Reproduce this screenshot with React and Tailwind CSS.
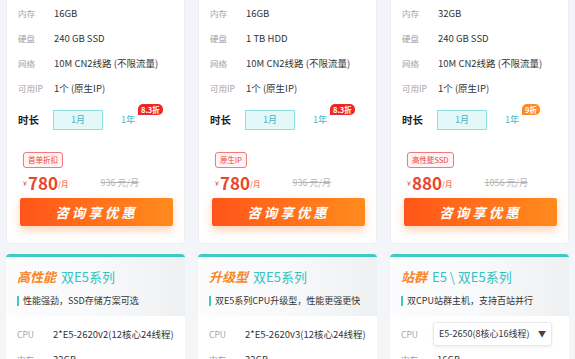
const font = { fontFamily: '"Noto Sans CJK SC", "Noto Sans", sans-serif' }

const plans = [
  { mem: "16GB", disk: "240 GB SSD", badge: "8.3折", badgeCls: "bg-[#f0262a]", tag: "首单折扣", price: "780", old: "936 元/月" },
  { mem: "16GB", disk: "1 TB HDD", badge: "8.3折", badgeCls: "bg-[#f0262a]", tag: "原生IP", price: "780", old: "936 元/月" },
  { mem: "32GB", disk: "240 GB SSD", badge: "9折", badgeCls: "bg-[#ff8a1c]", tag: "高性能SSD", price: "880", old: "1056 元/月" },
]

const series = [
  { hot: "高性能", name: "双E5系列", desc: "性能强劲，SSD存储方案可选", cpu: "2*E5-2620v2(12核心24线程)", mem: "32GB" },
  { hot: "升级型", name: "双E5系列", desc: "双E5系列CPU升级型，性能更强更快", cpu: "2*E5-2620v3(12核心24线程)", mem: "32GB" },
  { hot: "站群", name: "E5 \\ 双E5系列", desc: "双CPU站群主机，支持百站并行", cpu: "E5-2650(8核心16线程)", mem: "16GB", select: true },
]

const Row = ({ label, value }) => (
  <div className="flex items-center h-[25px] text-[9.5px]">
    <span className="w-[36px] text-[#a3a3a3] text-[8.5px]">{label}</span>
    <span className="text-[#333]">{value}</span>
  </div>
)

const PlanCard = ({ p }) => (
  <div className="bg-white rounded-b-[4px] border border-t-0 border-[#eceef1] px-[11px] pt-[1px] pb-[17px]">
    <Row label="内存" value={p.mem} />
    <Row label="硬盘" value={p.disk} />
    <Row label="网络" value="10M CN2线路 (不限流量)" />
    <Row label="可用IP" value="1个 (原生IP)" />
    <div className="flex items-center h-[20px] mt-[9px]">
      <span className="w-[35px] font-bold text-[10.5px] text-[#222]">时长</span>
      <div className="w-[50px] h-[20px] flex items-center justify-center bg-[#e3f8f9] border border-[#8edfe2] text-[#46b6c4] text-[9px]">1月</div>
      <div className="relative ml-[18px] text-[#46b6c4] text-[9px]">
        1年
        <span className={`absolute left-[17px] top-[-9px] ${p.badgeCls} text-white text-[7.5px] font-bold leading-none px-[3px] py-[1.5px] rounded-[5px] rounded-bl-none whitespace-nowrap`}>{p.badge}</span>
      </div>
    </div>
    <div className="pl-[5px] mt-[14px]">
      <span className="inline-block border border-[#f07a7a] bg-[#fff3f3] text-[#e8473b] text-[7.5px] leading-none px-[4px] py-[3px] rounded-[3px]">{p.tag}</span>
      <div className="flex items-end mt-[1px] h-[22px]">
        <span className="text-[#e8472e] text-[7px] mb-[3px]">¥</span>
        <span className="text-[#e8472e] text-[17px] font-bold leading-none ml-[1px]">{p.price}</span>
        <span className="text-[#e8472e] text-[7.5px] mb-[2px]">/月</span>
        <span className="ml-[32px] text-[#b5b5b5] text-[9px] line-through mb-[2px]">{p.old}</span>
      </div>
    </div>
    <button className="mt-[7px] ml-[2px] w-[153px] h-[28px] rounded-[2px] bg-gradient-to-r from-[#ff5419] to-[#ff8a1d] shadow-[0_4px_8px_rgba(255,120,40,0.35)] text-white text-[13.5px] font-bold italic tracking-[3px]">
      咨询享优惠
    </button>
  </div>
)

const SeriesCard = ({ s }) => (
  <div className="bg-white rounded-t-[4px] border-t-[3px] border-[#3ccac4] overflow-hidden">
    <div className="h-[59px] px-[11px] pt-[11px] bg-gradient-to-r from-[#fcfcfd] via-[#f8f9fa] to-[#eef0f2]">
      <div className="flex items-center gap-[5px] h-[17px]">
        <span className="text-[#f7862a] text-[13px] font-bold italic">{s.hot}</span>
        <span className="text-[#33c2bf] text-[13px]">{s.name}</span>
      </div>
      <div className="flex items-center mt-[9px]">
        <span className="w-[2px] h-[10px] bg-[#3ccac4] mr-[4px]" />
        <span className="text-[9px] text-[#333]">{s.desc}</span>
      </div>
    </div>
    <div className="px-[11px] pt-[5px]">
      <div className="flex items-center h-[26px] text-[9.5px]">
        <span className="w-[36px] text-[#a3a3a3] text-[8.5px]">CPU</span>
        {s.select ? (
          <div className="-ml-[4px] w-[119px] h-[24px] flex items-center justify-between px-[5px] border border-[#e6e8eb] rounded-[3px] shadow-[0_1px_3px_rgba(0,0,0,0.08)] text-[#333] text-[9px]">
            {s.cpu}
            <span className="text-[8px] text-[#444]">▼</span>
          </div>
        ) : (
          <span className="text-[#333]">{s.cpu}</span>
        )}
      </div>
      <Row label="内存" value={s.mem} />
    </div>
  </div>
)

export default function App() {
  return (
    <div className="w-[575px] h-[359px] overflow-hidden bg-[#f3f5f8] px-[6px]" style={font}>
      <div className="grid grid-cols-3 gap-x-[13px] gap-y-[10px]">
        {plans.map((p, i) => <PlanCard key={i} p={p} />)}
        {series.map((s, i) => <SeriesCard key={i} s={s} />)}
      </div>
    </div>
  )
}
